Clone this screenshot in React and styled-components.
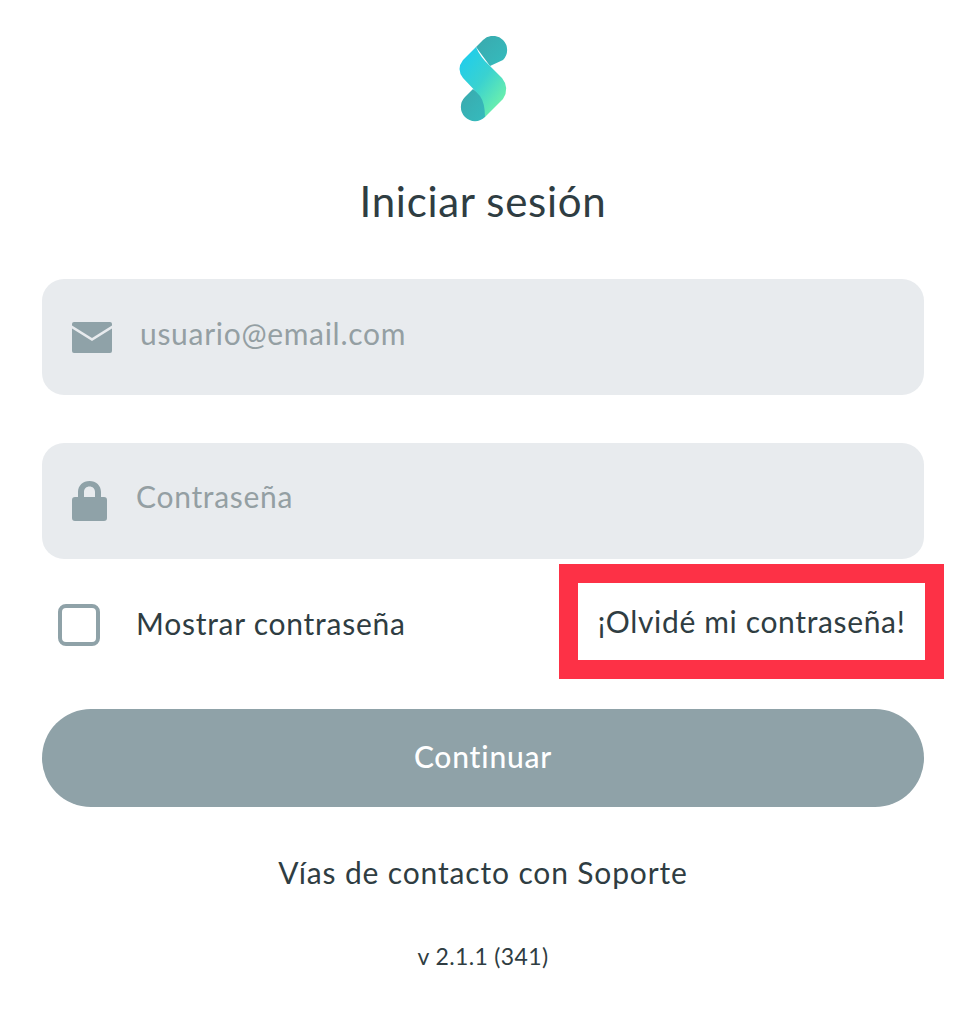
import React from "react";
import styled, { createGlobalStyle } from "styled-components";

const Global = createGlobalStyle`
  html, body {
    margin: 0;
    background: #fff;
  }
  body {
    font-family: "Lato", "Open Sans", sans-serif;
    color: #2f3d42;
  }
`;

const Page = styled.div`
  width: 967px;
  height: 1024px;
  box-sizing: border-box;
  padding: 36px 43px 0 42px;
  display: flex;
  flex-direction: column;
  overflow: hidden;
`;

const Logo = styled.svg`
  display: block;
  align-self: center;
  width: 110px;
  height: 100px;
  margin-bottom: 40px;
`;

const Title = styled.h1`
  margin: 0 0 53px;
  height: 50px;
  line-height: 50px;
  font-size: 42px;
  font-weight: 400;
  text-align: center;
  letter-spacing: 0.7px;
`;

const Field = styled.div`
  height: 116px;
  box-sizing: border-box;
  background: #e8ebee;
  border-radius: 22px;
  padding-left: 30px;
  margin-bottom: ${(p) => p.$gap}px;
  display: flex;
  align-items: center;
  gap: ${(p) => p.$iconGap}px;
  svg {
    flex: none;
  }
`;

const Placeholder = styled.span`
  margin-bottom: ${(p) => p.$lift}px;
  color: #949fa3;
  font-size: 30px;
  letter-spacing: 0.7px;
`;

const OptionsRow = styled.div`
  height: 120px;
  margin-right: -20px;
  display: flex;
  align-items: center;
  justify-content: space-between;
`;

const ShowPassword = styled.label`
  display: flex;
  align-items: center;
  gap: 35px;
  padding: 7px 0 0 16px;
  font-size: 30px;
  letter-spacing: 0.75px;
`;

const Checkbox = styled.span`
  width: 42px;
  height: 42px;
  box-sizing: border-box;
  border: 4px solid #8fa2a8;
  border-radius: 8px;
  margin: 5px 1px 0 0;
`;

const ForgotLink = styled.a`
  width: 385px;
  height: 115px;
  box-sizing: border-box;
  border: 19px solid #fd3146;
  display: flex;
  align-items: center;
  justify-content: center;
  font-size: 30px;
  letter-spacing: 0.65px;
  margin-top: 4px;
`;

const Submit = styled.button`
  display: block;
  width: 100%;
  height: 98px;
  margin-top: 30px;
  padding: 0 0 5px;
  border: 0;
  border-radius: 49px;
  background: #8fa2a8;
  color: #fff;
  font-family: inherit;
  font-size: 30px;
  font-weight: 500;
  letter-spacing: 0.8px;
`;

const Contact = styled.div`
  margin-top: 45px;
  height: 40px;
  line-height: 40px;
  text-align: center;
  font-size: 30px;
  letter-spacing: 0.85px;
`;

const Version = styled.div`
  margin-top: 49px;
  height: 30px;
  line-height: 30px;
  text-align: center;
  font-size: 23px;
  letter-spacing: 0.35px;
`;

function BrandMark() {
  return (
    <Logo viewBox="-2 16 110 100">
      <defs>
        <linearGradient id="band" x1="0.1" y1="0.1" x2="0.8" y2="0.9">
          <stop offset="0" stopColor="#1fcdec" />
          <stop offset="0.5" stopColor="#3ad2d0" />
          <stop offset="1" stopColor="#6cf0ac" />
        </linearGradient>
        <linearGradient id="cap" x1="0" y1="0" x2="1" y2="1">
          <stop offset="0" stopColor="#3aa9ad" />
          <stop offset="1" stopColor="#35bcbe" />
        </linearGradient>
      </defs>
      <path d="M53 20 A14.100 14.100 0 0 1 73 40 L60 46 L46 27 Z" fill="url(#cap)" />
      <path d="M35 77 L43 69 L58 80 L55 97 A14.100 14.100 0 0 1 35 77 Z" fill="url(#cap)" />
      <path
        d="M46 27 L33 40 Q26 49 33 58 L50 76 Q55 83 55 97 L73 79 Q80 68 72 58 L60 46 Q50 37 46 27 Z"
        fill="url(#band)"
      />
    </Logo>
  );
}

function MailIcon() {
  return (
    <svg width="40" height="31" viewBox="0 0 40 31">
      <path
        d="M2 0h36a2 2 0 0 1 2 2v1.500L20 16 0 3.500V2a2 2 0 0 1 2-2Z"
        fill="#8fa2a8"
      />
      <path
        d="M0 6.500 20 19 40 6.500V29a2 2 0 0 1-2 2H2a2 2 0 0 1-2-2Z"
        fill="#8fa2a8"
      />
    </svg>
  );
}

function LockIcon() {
  return (
    <svg width="35" height="40" viewBox="0 0 35 40">
      <path
        fillRule="evenodd"
        d="M6 16v-5C6 4.500 11 0 17.500 0S29 4.500 29 11v5h3a3 3 0 0 1 3 3v18a3 3 0 0 1-3 3H3a3 3 0 0 1-3-3V19a3 3 0 0 1 3-3ZM12 16h11v-5c0-3.300-2.300-5.500-5.500-5.500S12 7.700 12 11Z"
        fill="#8fa2a8"
      />
    </svg>
  );
}

export default function App() {
  return (
    <Page>
      <Global />
      <BrandMark />
      <Title>Iniciar sesión</Title>
      <Field $gap={48} $iconGap={28}>
        <MailIcon />
        <Placeholder $lift={8}>usuario@email.com</Placeholder>
      </Field>
      <Field $gap={0} $iconGap={29}>
        <LockIcon />
        <Placeholder $lift={10}>Contraseña</Placeholder>
      </Field>
      <OptionsRow>
        <ShowPassword>
          <Checkbox />
          Mostrar contraseña
        </ShowPassword>
        <ForgotLink>¡Olvidé mi contraseña!</ForgotLink>
      </OptionsRow>
      <Submit>Continuar</Submit>
      <Contact>Vías de contacto con Soporte</Contact>
      <Version>v 2.1.1 (341)</Version>
    </Page>
  );
}
